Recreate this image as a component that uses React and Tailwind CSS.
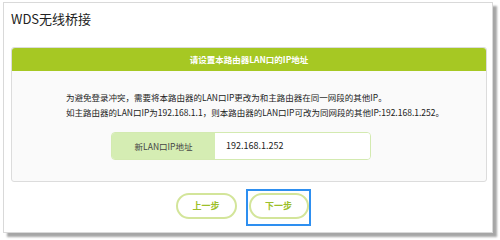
export default function App() {
  const font = { fontFamily: '"Noto Sans CJK SC", "Liberation Sans", sans-serif' };
  return (
    <div className="w-[500px] h-[240px] bg-white pt-[2px] pl-[3px]" style={font}>
      <div className="w-[490px] h-[231px] bg-white border border-[#d9d9d9] shadow-[4px_4px_2px_rgba(0,0,0,0.35)] flex flex-col px-[7px]">
        <div className="h-[44px] pt-[4px] text-[13px] text-[#222] leading-[24px]">WDS无线桥接</div>
        <div className="w-[476px] border border-[#dcdcdc] rounded-[3px] bg-[#fafafa] h-[135px] flex flex-col">
          <div className="h-[23px] bg-[#a6c823] rounded-t-[3px] text-white text-[8.5px] font-bold flex items-center justify-center">请设置本路由器LAN口的IP地址</div>
          <div className="pl-[54px] pt-[19px] text-[8.5px] text-[#222] leading-[15px] whitespace-nowrap">
            <div>为避免登录冲突，需要将本路由器的LAN口IP更改为和主路由器在同一网段的其他IP。</div>
            <div>如主路由器的LAN口IP为192.168.1.1，则本路由器的LAN口IP可改为同网段的其他IP:192.168.1.252。</div>
          </div>
          <div className="mt-[12px] ml-[99px] flex h-[28px] w-[260px] rounded-[4px] border border-[#d3eab0] overflow-hidden">
            <div className="w-[103px] bg-[#d5edb3] text-[8.5px] text-[#444] flex items-center justify-center">新LAN口IP地址</div>
            <div className="flex-1 bg-white text-[9px] text-[#222] flex items-center pl-[11px]">192.168.1.252</div>
          </div>
        </div>
        <div className="flex justify-center gap-[9px] mt-[7px] pr-[10px]">
          <div className="mt-[4px] w-[61px] h-[26px] rounded-full border-2 border-[#d3e59a] text-[9px] font-bold text-[#9dbf2a] flex items-center justify-center">上一步</div>
          <div className="w-[65px] h-[37px] border-2 border-[#2e8ff0] pt-[2px] pl-[1px]">
            <div className="w-[60px] h-[26px] rounded-full border-2 border-[#d3e59a] text-[9px] font-bold text-[#9dbf2a] flex items-center justify-center">下一步</div>
          </div>
        </div>
      </div>
    </div>
  );
}
